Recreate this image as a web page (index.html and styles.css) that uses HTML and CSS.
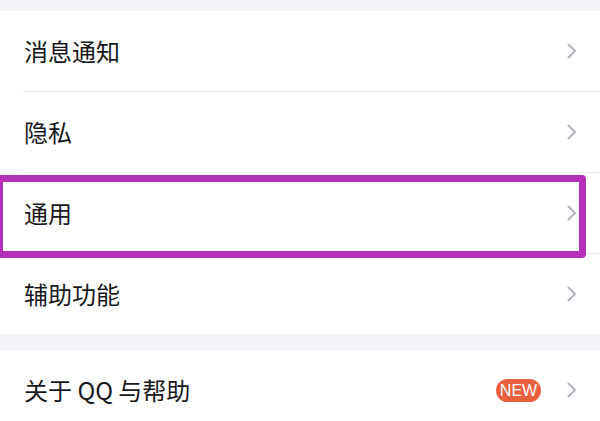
FILE: index.html
```html
<!DOCTYPE html>
<html lang="zh-CN">
<head>
<meta charset="utf-8">
<link rel="stylesheet" href="styles.css">
</head>
<body>
<div class="page">
  <div class="gap gap-top"></div>
  <section class="group">
    <div class="row"><span class="label">消息通知</span><svg class="chev" viewBox="0 0 10 16"><path d="M1.5 1.5 L8 8 L1.5 14.5"/></svg></div>
    <div class="row"><span class="label">隐私</span><svg class="chev" viewBox="0 0 10 16"><path d="M1.5 1.5 L8 8 L1.5 14.5"/></svg></div>
    <div class="row row-hl"><span class="label">通用</span><svg class="chev" viewBox="0 0 10 16"><path d="M1.5 1.5 L8 8 L1.5 14.5"/></svg><div class="hl"></div></div>
    <div class="row"><span class="label">辅助功能</span><svg class="chev" viewBox="0 0 10 16"><path d="M1.5 1.5 L8 8 L1.5 14.5"/></svg></div>
  </section>
  <div class="gap gap-mid"></div>
  <section class="group">
    <div class="row"><span class="label">关于 QQ 与帮助</span><span class="badge">NEW</span><svg class="chev" viewBox="0 0 10 16"><path d="M1.5 1.5 L8 8 L1.5 14.5"/></svg></div>
  </section>
</div>
</body>
</html>
```

FILE: styles.css
```css
html, body {
  margin: 0;
  padding: 0;
  background: #f3f4f8;
  overflow: hidden;
}
.page {
  width: 600px;
  font-family: "Noto Sans CJK SC", "Noto Sans", sans-serif;
}
.gap { background: #f3f4f8; }
.gap-top { height: 11px; }
.gap-mid { height: 16px; }
.group { background: #ffffff; }
.row {
  position: relative;
  height: 80px;
  display: flex;
  align-items: center;
  padding: 0 23px 0 24px;
}
.row + .row::before {
  content: "";
  position: absolute;
  top: -1px;
  left: 23px;
  right: 0;
  height: 1px;
  background: #ebebef;
}
.row + .row { margin-top: 1px; }
.label {
  flex: 1;
  font-size: 24px;
  color: #17181c;
  line-height: 1;
}
.chev {
  width: 10px;
  height: 16px;
  fill: none;
  stroke: #b2b4bf;
  stroke-width: 2;
  stroke-linecap: round;
  stroke-linejoin: round;
}
.badge {
  height: 23px;
  width: 45px;
  border-radius: 12px;
  background: #e8603e;
  color: #fff;
  font-family: "Liberation Sans", Arial, sans-serif;
  font-size: 16px;
  line-height: 23px;
  text-align: center;
  margin-right: 26px;
}
.hl {
  position: absolute;
  left: -4px;
  top: 2px;
  width: 590px;
  height: 83px;
  box-sizing: border-box;
  border: 7px solid #b530b8;
  border-radius: 4px;
  pointer-events: none;
  z-index: 2;
}
.row-hl + .row::before { z-index: 0; }
```
